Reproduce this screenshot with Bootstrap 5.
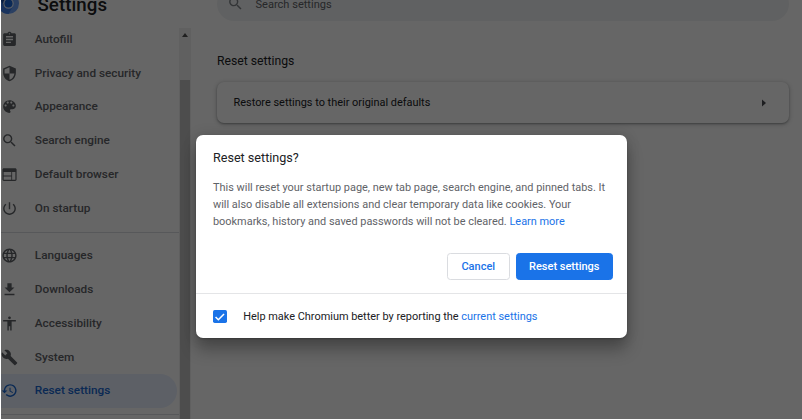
<!DOCTYPE html>
<html lang="en">
<head>
<meta charset="utf-8">
<meta name="viewport" content="width=device-width, initial-scale=1">
<title>Settings</title>
<link href="https://cdn.jsdelivr.net/npm/bootstrap@5.3.0/dist/css/bootstrap.min.css" rel="stylesheet">
<style>
html,body{height:420px;overflow:hidden}
body{font-family:Roboto,"Liberation Sans",sans-serif;font-size:11px;line-height:17px;color:#202124;background:#fff}
a{color:#1a73e8;text-decoration:none}
.app-shell{height:419px;margin-left:1px;overflow:hidden;position:relative;background:#fff}
.side-pane{width:190px;flex:none}
.side-head{height:22.5px;flex:none}
.brand-logo{width:21px;height:21px;margin:-7px 0 0 -3px;flex:none}
.brand-title{font-size:18.7px;line-height:24px;font-weight:500;margin:-7px 0 0 18.5px;letter-spacing:.05px}
.menu-link{height:33.75px;padding:0;font-size:11.8px;font-weight:500;color:#5f6368;border-radius:0 17px 17px 0;width:175.5px;--bs-nav-link-color:#5f6368}
.menu-link svg{width:17px;height:17px;margin:0 16.6px 0 .2px;fill:currentColor;flex:none}
.menu-link.active{background:#e8f0fe;color:#1967d2}
.menu-rule{height:1px;background:#dadce0;width:178px}
.rule-mid{margin:6.5px 0}
.rule-end{margin-top:6.2px}
.scroll-track{width:12px;background:#f1f1f1;margin-top:28px;flex:none}
.scroll-thumb{width:10px;margin:43px auto 0;background:#c1c1c1}
.scroll-up{width:0;border:3px solid transparent;border-top:0;border-bottom:4px solid #505050;margin:4.5px auto 0}
.search-box{height:34px;margin-top:-13.4px;background:#f1f3f4;color:#5f6368;border-radius:17px;font-size:11.05px}
.search-box span{padding-top:1px}
.search-box svg{width:17px;height:17px;fill:#80868b;margin:0 11.5px 0 10px}
.section-title{font-size:12.2px;line-height:18px;font-weight:400;margin:31.2px 0 0}
.reset-card{height:41px;margin-top:12.4px;border-radius:7px;border:0;box-shadow:0 1px 2px rgba(60,64,67,.4),0 1px 4px 1px rgba(60,64,67,.2);padding:0 23px 0 16.5px;font-size:10.93px}
.main-pane{padding:0 13px 0 26px;min-width:0}
.veil{background:rgba(0,0,0,.6);z-index:2}
.dialog-box{left:195.4px;top:135.3px;width:430.4px;height:203px;z-index:3;background:#fff;border-radius:7px;box-shadow:0 0 14px rgba(0,0,0,.14),0 12px 16px rgba(0,0,0,.28),0 1px 2px rgba(0,0,0,.2)}
.dialog-top{height:159px;padding:14px 14px 13.6px 16.6px;border-bottom:1px solid #e4e5e7}
.dialog-title{font-size:12.6px;line-height:18px;font-weight:400;margin:0 0 11.8px}
.dialog-text{font-size:10.93px;line-height:17.15px;color:#5f6368;margin:0;white-space:nowrap}
.dialog-actions{gap:6px}
.dlg-btn{height:27px;padding:0;font-size:11px;font-weight:500;border-radius:3.4px;line-height:25px}
.btn-cancel{width:63px;color:#1a73e8;border:1px solid #dadce0}
.btn-reset{width:97px;color:#fff;background:#1a73e8;border:1px solid #1a73e8}
.dialog-foot{padding-left:16.6px;font-size:10.93px}
.tick{width:13.6px;height:13.6px;border-radius:1.7px;background:#1a73e8;margin-right:16.6px;flex:none}
</style>
<script src="https://cdn.jsdelivr.net/npm/bootstrap@5.3.0/dist/js/bootstrap.bundle.min.js"></script>
</head>
<body>
<div class="app-shell">
  <div class="d-flex h-100">
    <aside class="side-pane d-flex h-100">
      <div class="d-flex flex-column flex-grow-1">
        <div class="side-head d-flex align-items-start">
          <svg class="brand-logo" viewBox="0 0 24 24"><circle cx="12" cy="12" r="12" fill="#6ba1f5"/><path d="M1.6 6A12 12 0 0 0 12 24l5.200-9L12 12 6.800 15z" fill="#3f7fe8"/><path d="M12 0A12 12 0 0 0 1.600 6l5.200 9L12 7z" fill="#174ea6"/><circle cx="12" cy="12" r="6" fill="#dbe8fc"/><circle cx="12" cy="12" r="4.600" fill="#1a66d6"/></svg>
          <h1 class="brand-title">Settings</h1>
        </div>
        <nav class="nav flex-column flex-nowrap">
          <a class="nav-link menu-link d-flex align-items-center" href="#"><svg viewBox="0 0 24 24"><path d="M19 3h-4.180C14.400 1.840 13.300 1 12 1s-2.400.84-2.820 2H5c-1.100 0-2 .9-2 2v14c0 1.100.9 2 2 2h14c1.100 0 2-.9 2-2V5c0-1.100-.9-2-2-2zm-7 0c.55 0 1 .45 1 1s-.45 1-1 1-1-.45-1-1 .45-1 1-1zm2 14H7v-2h7v2zm3-4H7v-2h10v2zm0-4H7V7h10v2z"/></svg>Autofill</a>
          <a class="nav-link menu-link d-flex align-items-center" href="#"><svg viewBox="0 0 24 24"><path d="M12 1L3 5v6c0 5.550 3.840 10.740 9 12 5.160-1.260 9-6.450 9-12V5l-9-4zm0 10.990h7c-.53 4.120-3.280 7.790-7 8.940V12H5V6.300l7-3.110v8.800z"/></svg>Privacy and security</a>
          <a class="nav-link menu-link d-flex align-items-center" href="#"><svg viewBox="0 0 24 24"><path d="M12 3c-4.970 0-9 4.030-9 9s4.030 9 9 9c.83 0 1.500-.67 1.500-1.500 0-.39-.15-.74-.39-1.010-.23-.26-.38-.61-.38-.99 0-.83.67-1.500 1.500-1.500H16c2.760 0 5-2.240 5-5 0-4.420-4.030-8-9-8zm-5.500 9c-.83 0-1.500-.67-1.500-1.500S5.670 9 6.500 9 8 9.670 8 10.500 7.330 12 6.500 12zm3-4C8.670 8 8 7.330 8 6.500S8.670 5 9.500 5s1.500.67 1.500 1.500S10.330 8 9.500 8zm5 0c-.83 0-1.500-.67-1.500-1.500S13.670 5 14.500 5s1.500.67 1.500 1.500S15.330 8 14.500 8zm3 4c-.83 0-1.500-.67-1.500-1.500S16.670 9 17.500 9s1.500.67 1.500 1.500-.67 1.500-1.500 1.500z"/></svg>Appearance</a>
          <a class="nav-link menu-link d-flex align-items-center" href="#"><svg viewBox="0 0 24 24"><path d="M15.500 14h-.79l-.28-.27C15.410 12.590 16 11.110 16 9.500 16 5.910 13.090 3 9.500 3S3 5.910 3 9.500 5.910 16 9.500 16c1.610 0 3.090-.59 4.230-1.570l.27.28v.79l5 4.990L20.490 19l-4.990-5zm-6 0C7.010 14 5 11.990 5 9.500S7.010 5 9.500 5 14 7.010 14 9.500 11.990 14 9.500 14z"/></svg>Search engine</a>
          <a class="nav-link menu-link d-flex align-items-center" href="#"><svg viewBox="0 0 24 24"><path fill-rule="evenodd" d="M20 3H4c-1.100 0-2 .9-2 2v14c0 1.100.9 2 2 2h16c1.100 0 2-.9 2-2V5c0-1.100-.9-2-2-2zM14.500 19.300H3.700v-4.600h10.800v4.600zm0-5.800H3.700V8.500h10.800v5zm5.800 5.800h-4.600V8.500h4.600v10.800z"/></svg>Default browser</a>
          <a class="nav-link menu-link d-flex align-items-center" href="#"><svg viewBox="0 0 24 24"><path d="M13 3h-2v10h2V3zm4.830 2.170l-1.420 1.420C17.990 7.860 19 9.810 19 12c0 3.870-3.130 7-7 7s-7-3.130-7-7c0-2.190 1.010-4.140 2.580-5.420L6.170 5.170C4.230 6.820 3 9.260 3 12c0 4.970 4.030 9 9 9s9-4.030 9-9c0-2.740-1.230-5.180-3.170-6.830z"/></svg>On startup</a>
          <div class="menu-rule rule-mid"></div>
          <a class="nav-link menu-link d-flex align-items-center" href="#"><svg viewBox="0 0 24 24"><path d="M11.990 2C6.470 2 2 6.480 2 12s4.470 10 9.990 10C17.520 22 22 17.520 22 12S17.520 2 11.990 2zm6.930 6h-2.950c-.32-1.250-.78-2.450-1.380-3.560 1.840.63 3.370 1.910 4.330 3.560zM12 4.040c.83 1.200 1.480 2.530 1.910 3.960h-3.820c.43-1.430 1.080-2.760 1.910-3.960zM4.260 14C4.100 13.360 4 12.690 4 12s.1-1.360.26-2h3.380c-.08.66-.14 1.320-.14 2 0 .68.06 1.340.14 2H4.260zm.82 2h2.950c.32 1.250.78 2.450 1.380 3.560-1.840-.63-3.370-1.900-4.330-3.560zm2.950-8H5.080c.96-1.660 2.490-2.930 4.330-3.560C8.810 5.550 8.350 6.750 8.030 8zM12 19.960c-.83-1.200-1.480-2.530-1.910-3.960h3.820c-.43 1.430-1.080 2.760-1.910 3.960zM14.340 14H9.660c-.09-.66-.16-1.320-.16-2 0-.68.07-1.350.16-2h4.680c.09.65.16 1.320.16 2 0 .68-.07 1.340-.16 2zm.25 5.560c.6-1.110 1.060-2.310 1.380-3.560h2.950c-.96 1.650-2.490 2.930-4.330 3.560zM16.360 14c.08-.66.14-1.320.14-2 0-.68-.06-1.340-.14-2h3.380c.16.64.26 1.310.26 2s-.1 1.360-.26 2h-3.380z"/></svg>Languages</a>
          <a class="nav-link menu-link d-flex align-items-center" href="#"><svg viewBox="0 0 24 24"><path d="M19 9h-4V3H9v6H5l7 7 7-7zM5 18v2h14v-2H5z"/></svg>Downloads</a>
          <a class="nav-link menu-link d-flex align-items-center" href="#"><svg viewBox="0 0 24 24"><path d="M12 2c1.100 0 2 .9 2 2s-.9 2-2 2-2-.9-2-2 .9-2 2-2zm9 7h-6v13h-2v-6h-2v6H9V9H3V7h18v2z"/></svg>Accessibility</a>
          <a class="nav-link menu-link d-flex align-items-center" href="#"><svg viewBox="0 0 24 24"><path d="M22.700 19l-9.100-9.100c.9-2.300.4-5-1.500-6.900-2-2-5-2.400-7.400-1.300L9 6 6 9 1.600 4.700C.4 7.100.9 10.100 2.900 12.100c1.900 1.900 4.600 2.400 6.900 1.500l9.100 9.100c.4.4 1 .4 1.400 0l2.300-2.300c.5-.4.5-1.100.1-1.400z"/></svg>System</a>
          <a class="nav-link menu-link active d-flex align-items-center" href="#"><svg viewBox="0 0 24 24"><path d="M13 3c-4.970 0-9 4.030-9 9H1l3.890 3.890.07.14L9 12H6c0-3.870 3.130-7 7-7s7 3.130 7 7-3.130 7-7 7c-1.930 0-3.680-.79-4.940-2.060l-1.420 1.420C8.270 19.990 10.510 21 13 21c4.970 0 9-4.030 9-9s-4.030-9-9-9zm-1 5v5l4.280 2.540.72-1.210-3.500-2.080V8H12z"/></svg>Reset settings</a>
          <div class="menu-rule rule-end"></div>
        </nav>
      </div>
      <div class="scroll-track d-flex flex-column"><div class="scroll-up"></div><div class="scroll-thumb flex-grow-1"></div></div>
    </aside>
    <main class="main-pane flex-grow-1">
      <div class="search-box d-flex align-items-center"><svg viewBox="0 0 24 24"><path d="M15.500 14h-.79l-.28-.27C15.410 12.590 16 11.110 16 9.500 16 5.910 13.090 3 9.500 3S3 5.910 3 9.500 5.910 16 9.500 16c1.610 0 3.090-.59 4.230-1.570l.27.28v.79l5 4.990L20.490 19l-4.990-5zm-6 0C7.010 14 5 11.990 5 9.500S7.010 5 9.500 5 14 7.010 14 9.500 11.990 14 9.500 14z"/></svg><span>Search settings</span></div>
      <h2 class="section-title">Reset settings</h2>
      <div class="card reset-card flex-row align-items-center justify-content-between"><span>Restore settings to their original defaults</span><svg width="4" height="8" viewBox="0 0 4 8"><path d="M0 .5L4 4 0 7.500z" fill="#4a4d51"/></svg></div>
    </main>
  </div>
  <div class="veil position-absolute top-0 start-0 w-100 h-100"></div>
  <div class="dialog-box position-absolute d-flex flex-column" role="dialog" aria-label="Reset settings?">
    <div class="dialog-top d-flex flex-column">
      <h2 class="dialog-title">Reset settings?</h2>
      <p class="dialog-text">This will reset your startup page, new tab page, search engine, and pinned tabs. It<br>will also disable all extensions and clear temporary data like cookies. Your<br>bookmarks, history and saved passwords will not be cleared. <a href="#">Learn more</a></p>
      <div class="dialog-actions d-flex justify-content-end mt-auto"><button class="btn dlg-btn btn-cancel" type="button">Cancel</button><button class="btn dlg-btn btn-reset" type="button">Reset settings</button></div>
    </div>
    <div class="dialog-foot d-flex align-items-center flex-grow-1">
      <svg class="tick" viewBox="0 0 16 16"><path d="M3 8.200l3.300 3.300L13 4.700" fill="none" stroke="#fff" stroke-width="1.800"/></svg>
      <span>Help make Chromium better by reporting the <a href="#">current settings</a></span>
    </div>
  </div>
</div>
</body>
</html>
